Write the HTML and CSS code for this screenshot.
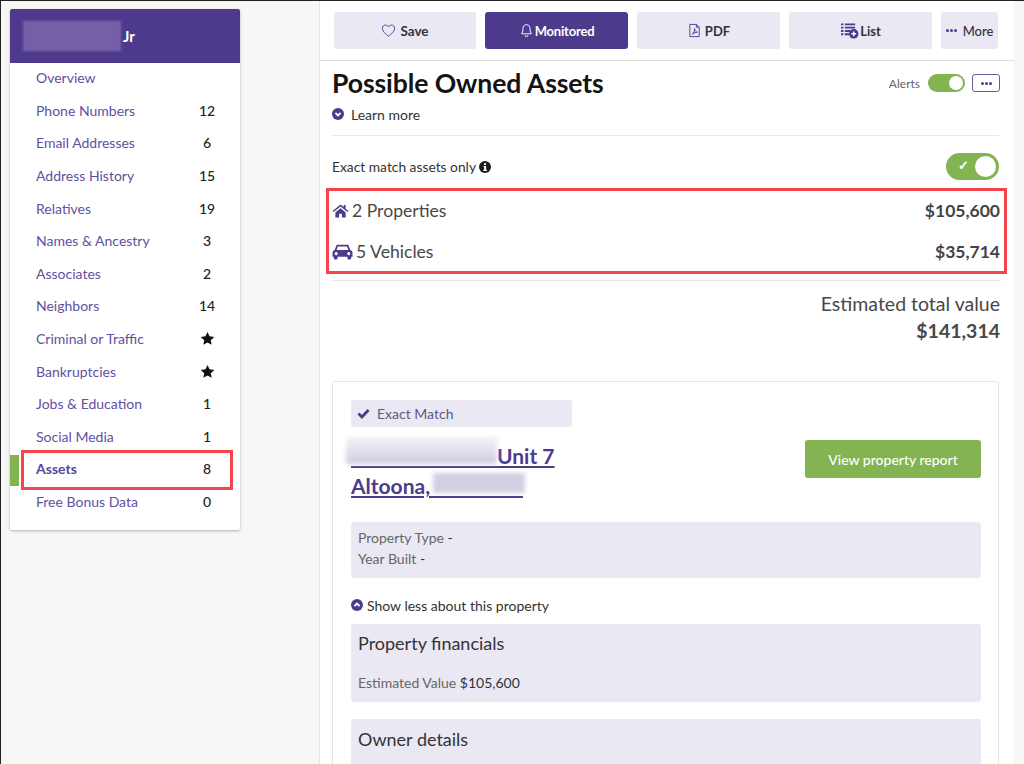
FILE: index.html
```html
<!DOCTYPE html>
<html lang="en">
<head>
<meta charset="utf-8">
<title>Possible Owned Assets</title>
<link rel="stylesheet" href="styles.css">
</head>
<body>
<div class="page">
  <aside class="side">
    <div class="side-head"><span class="blur-name"></span><span class="jr">Jr</span></div>
    <ul class="nav">
      <li class="nav-item"><span>Overview</span></li>
      <li class="nav-item"><span>Phone Numbers</span><b>12</b></li>
      <li class="nav-item"><span>Email Addresses</span><b>6</b></li>
      <li class="nav-item"><span>Address History</span><b>15</b></li>
      <li class="nav-item"><span>Relatives</span><b>19</b></li>
      <li class="nav-item"><span>Names &amp; Ancestry</span><b>3</b></li>
      <li class="nav-item"><span>Associates</span><b>2</b></li>
      <li class="nav-item"><span>Neighbors</span><b>14</b></li>
      <li class="nav-item"><span>Criminal or Traffic</span><b><svg class="star" viewBox="0 0 24 24"><path d="M12 1.500l3.200 7 7.600.9-5.600 5.200 1.500 7.500L12 18.300l-6.700 3.800 1.500-7.500L1.200 9.400l7.600-.9z"/></svg></b></li>
      <li class="nav-item"><span>Bankruptcies</span><b><svg class="star" viewBox="0 0 24 24"><path d="M12 1.500l3.200 7 7.600.9-5.600 5.200 1.500 7.500L12 18.300l-6.700 3.800 1.500-7.500L1.200 9.400l7.600-.9z"/></svg></b></li>
      <li class="nav-item"><span>Jobs &amp; Education</span><b>1</b></li>
      <li class="nav-item"><span>Social Media</span><b>1</b></li>
      <li class="nav-item active"><span>Assets</span><b>8</b></li>
      <li class="nav-item"><span>Free Bonus Data</span><b>0</b></li>
    </ul>
  </aside>

  <main class="main">
    <div class="toolbar">
      <button class="btn wide first">
        <svg class="ico" viewBox="0 0 16 16"><path d="M8 14S1.500 10 1.500 5.600C1.500 3.500 3 2.200 4.800 2.200 6.200 2.200 7.400 3 8 4.200 8.600 3 9.800 2.200 11.200 2.200c1.800 0 3.300 1.300 3.300 3.400C14.500 10 8 14 8 14z" fill="none" stroke="#4e3a8d" stroke-width="1"/></svg><span class="save-label">Save</span>
      </button>
      <button class="btn wide primary">
        <svg class="ico" viewBox="0 0 16 16"><path d="M8 1.800c-2.400 0-3.800 1.800-3.800 4v2.700L2.800 11.500h10.400l-1.400-3V5.800c0-2.200-1.400-4-3.800-4zM6.500 13a1.500 1.500 0 003 0" fill="none" stroke="#fff" stroke-width="1"/></svg>Monitored
      </button>
      <button class="btn wide">
        <svg class="ico" viewBox="0 0 16 16"><path d="M3 1.500h7l3 3v10H3zM10 1.500v3h3M5.500 12c1.500-1 3-4 2.500-6 .2 2 1.500 3.500 3 3.800-1.800 0-3.800 1-5.500 2.200z" fill="none" stroke="#4e3a8d" stroke-width="1"/></svg>PDF
      </button>
      <button class="btn wide">
        <svg class="ico list-ico" viewBox="0 0 20 18"><path d="M1 1.500h2.500v2H1zM5 1.500h11v2H5zM1 5h2.500v2H1zM5 5h11v2H5zM1 8.500h2.500v2H1zM5 8.500h6v2H5zM1 12h2.500v2H1zM5 12h5v2H5z" fill="#4e3a8d"/><circle cx="14.500" cy="12.500" r="5" fill="#4e3a8d"/><path d="M14.500 10v5M12 12.500h5" stroke="#fff" stroke-width="1.500"/></svg>List
      </button>
      <button class="btn more"><span class="dots"><i></i><i></i><i></i></span>More</button>
    </div>

    <div class="content">
      <div class="title-row">
        <h1>Possible Owned Assets</h1>
        <div class="alerts">
          <span class="alerts-label">Alerts</span>
          <span class="toggle small"><i></i></span>
          <span class="menu-btn"><span class="dots"><i></i><i></i><i></i></span></span>
        </div>
      </div>
      <div class="learn">
        <svg class="round-ico" viewBox="0 0 12 12"><circle cx="6" cy="6" r="6" fill="#4e3a8d"/><path d="M3.400 4.800L6 7.400l2.600-2.600" fill="none" stroke="#fff" stroke-width="1.800"/></svg>
        <span>Learn more</span>
      </div>
      <div class="exact-row">
        <span class="exact-label">Exact match assets only
          <svg class="info" viewBox="0 0 12 12"><circle cx="6" cy="6" r="6" fill="#1c1c1c"/><path d="M5 2.300h2v1.700H5zM4.600 5h2.500v3.700h.8V10H4.300V8.700h.9V6.200h-.6z" fill="#fff"/></svg>
        </span>
        <span class="toggle large"><em>✓</em><i></i></span>
      </div>
      <div class="summary">
        <div class="sum-row">
          <span class="sum-name">
            <svg class="home" viewBox="0 0 18 16"><path d="M9 1.500L.6 8.500l1 1.200L9 3.600l7.400 6.100 1-1.200-3-2.500V2h-2v2.200zM3.500 10.200V15.500h4v-4h3v4h4v-5.300L9 5.600z" fill="#4e3a8d"/></svg>2 Properties</span>
          <b>$105,600</b>
        </div>
        <div class="sum-row">
          <span class="sum-name">
            <svg class="car" viewBox="0 0 20 16"><path d="M4.500 1.500h11l2 5c1.200.4 2 1.300 2 2.500v4h-1.200v1.500a1 1 0 01-1 1h-1.600a1 1 0 01-1-1V13H5.300v1.500a1 1 0 01-1 1H2.700a1 1 0 01-1-1V13H.5V9c0-1.200.8-2.100 2-2.500zM5.600 3.200L4.400 6.500h11.200l-1.200-3.300zM4 8.500a1.500 1.500 0 100 3 1.500 1.500 0 000-3zM16 8.500a1.500 1.500 0 100 3 1.500 1.500 0 000-3z" fill="#4e3a8d" fill-rule="evenodd"/></svg>5 Vehicles</span>
          <b>$35,714</b>
        </div>
      </div>
      <div class="total">
        <div class="total-label">Estimated total value</div>
        <div class="total-value">$141,314</div>
      </div>

      <section class="card">
        <div class="badge">
          <svg class="check" viewBox="0 0 14 12"><path d="M1.500 6l3.800 3.800L12.500 2.200" fill="none" stroke="#4e3a8d" stroke-width="3"/></svg>
          <span>Exact Match</span>
        </div>
        <div class="prop-head">
          <div class="addr">
            <a class="addr-link"><span class="gap-a"></span>Unit 7</a>
            <a class="addr-link"><span>Altoona,</span><span class="gap-b"></span></a>
            <span class="blur-a"></span>
            <span class="blur-b"></span>
          </div>
          <button class="report">View property report</button>
        </div>
        <div class="panel facts">
          <div>Property Type <span class="dash">-</span></div>
          <div>Year Built <span class="dash">-</span></div>
        </div>
        <div class="less">
          <svg class="round-ico" viewBox="0 0 12 12"><circle cx="6" cy="6" r="6" fill="#4e3a8d"/><path d="M3.400 7.200L6 4.600l2.600 2.600" fill="none" stroke="#fff" stroke-width="1.800"/></svg>
          <span>Show less about this property</span>
        </div>
        <div class="panel fin">
          <h2>Property financials</h2>
          <p>Estimated Value <span class="val">$105,600</span></p>
        </div>
        <div class="panel owner">
          <h2>Owner details</h2>
        </div>
      </section>
    </div>
  </main>
</div>
</body>
</html>
```
FILE: styles.css
```css
*, *::before, *::after { box-sizing: border-box; }
html, body { margin: 0; padding: 0; height: 764px; overflow: hidden; }
body { font-family: Lato, "Open Sans", sans-serif; background: #f7f7f7; color: #222; }

.page {
  display: flex;
  align-items: flex-start;
  height: 764px;
  border-top: 1px solid #222;
  border-left: 1px solid #222;
  overflow: hidden;
}

/* Sidebar */
.side {
  width: 230px;
  margin: 8px 0 0 9px;
  background: #fff;
  border-radius: 2px;
  box-shadow: 0 1px 3px rgba(0,0,0,.28);
  flex: none;
}
.side-head {
  height: 54px;
  background: #4e3a8d;
  border-radius: 2px 2px 0 0;
  display: flex;
  align-items: center;
  padding-left: 13px;
  color: #fff;
  font-weight: 700;
  font-size: 15px;
}
.blur-name {
  width: 98px;
  height: 30px;
  background: #7560a8;
  filter: blur(1px);
  margin-right: 2px;
}
.nav { list-style: none; margin: -1.6px 0 0; padding: 0 0 12.600px; }
.nav-item {
  position: relative;
  height: 32.6px;
  display: flex;
  align-items: center;
  justify-content: space-between;
  padding: 0 23px 0 26px;
  font-size: 14px;
  color: #5f51a0;
}
.nav-item b {
  width: 20px;
  text-align: center;
  font-weight: 500;
  color: #222;
  display: flex;
  justify-content: center;
}
.star { width: 15px; height: 15px; fill: #111; }
.nav-item.active { font-weight: 700; color: #55459a; }
.nav-item.active b { font-weight: 500; }
.nav-item.active::before {
  content: "";
  position: absolute;
  left: 0; top: 2px;
  width: 9px; height: 31px;
  background: #84b351;
}
.nav-item.active::after {
  content: "";
  position: absolute;
  left: 11px; top: -3px;
  width: 212px; height: 40px;
  border: 3px solid #f4444c;
}

/* Main */
.main {
  width: 695px;
  height: 763px;
  margin-left: 79px;
  background: #fff;
  border-left: 1px solid #e4e4e4;
  flex: none;
}
.toolbar {
  height: 60px;
  display: flex;
  gap: 9px;
  padding: 11px 15px 0 14px;
  border-bottom: 1px solid #ddd;
}
.btn {
  height: 37px;
  border: 0;
  border-radius: 3px;
  background: #eae8f3;
  font: 700 13px Lato, sans-serif;
  color: #33333f;
  display: flex;
  align-items: center;
  justify-content: center;
  padding: 0;
}
.btn.wide { width: 143px; }
.btn.wide.first { width: 142px; }
.btn.more { width: 57px; font-weight: 500; gap: 6px; }
.btn.primary { background: #4e3a8d; color: #fff; letter-spacing: -.2px; }
.btn.primary .ico { margin-right: 1px; }
.save-label { font-size: 13.5px; margin-left: 1px; }
.ico { width: 15px; height: 15px; margin-right: 3px; }
.list-ico { width: 19px; height: 17px; margin-right: 1px; }
.dots { display: inline-flex; gap: 1px; }
.dots i { width: 3px; height: 3px; background: #4e3a8d; border-radius: 50%; }

.content { padding: 0 15px 0 12px; }
.title-row {
  display: flex;
  justify-content: space-between;
  align-items: center;
  height: 44px;
}
h1 { margin: 0; font-size: 26.6px; font-weight: 700; color: #141414; letter-spacing: -.1px; }
.alerts { display: flex; align-items: center; gap: 6px; margin-right: -1px; }
.alerts-label { font-size: 12px; color: #666; margin-right: 2px; }
.toggle { position: relative; display: inline-block; background: #84b351; border-radius: 20px; }
.toggle.small { width: 37px; height: 18px; }
.toggle.small i { position: absolute; right: 2px; top: 2px; width: 14px; height: 14px; background: #fff; border-radius: 50%; }
.toggle.large { width: 53px; height: 27px; color: #fff; }
.toggle.large i { position: absolute; right: 3px; top: 3px; width: 21px; height: 21px; background: #fff; border-radius: 50%; }
.toggle.large em { position: absolute; left: 12px; top: 4px; font-style: normal; font-size: 13px; font-weight: 700; }
.menu-btn {
  width: 28px; height: 18px;
  border: 1px solid #6a5b9e;
  border-radius: 3px;
  display: flex;
  align-items: center;
  justify-content: center;
  margin-left: 1px;
}

.learn {
  display: flex;
  align-items: center;
  gap: 7px;
  font-size: 14px;
  color: #333;
  height: 31px;
  border-bottom: 1px solid #e8e8f2;
  padding-bottom: 12px;
}
.round-ico { width: 12px; height: 12px; flex: none; }

.exact-row {
  display: flex;
  justify-content: space-between;
  align-items: center;
  height: 52px;
  padding-top: 9px;
  font-size: 13.8px;
  color: #333;
}
.exact-label { display: flex; align-items: center; gap: 3px; }
.info { width: 12px; height: 12px; }

.summary {
  height: 86px;
  margin: 0 -8px 0 -6px;
  padding: 0 4px 0 3px;
  border: 3px solid #f4444c;
}
.sum-row {
  display: flex;
  justify-content: space-between;
  align-items: center;
  height: 41px;
  padding-bottom: 2px;
  font-size: 17.6px;
  color: #484848;
}
.sum-row b { font-size: 17.5px; font-weight: 700; color: #444; }
.sum-name { display: flex; align-items: center; gap: 3px; }
.home { width: 17px; height: 15px; }
.car { width: 21px; height: 17px; }

.total {
  margin: 6px -1px 0 0;
  border-top: 1px solid #e5e5e8;
  text-align: right;
  padding-top: 10px;
  color: #484848;
}
.total-label { font-size: 19.5px; line-height: 25px; }
.total-value { font-size: 19.5px; font-weight: 700; line-height: 30px; }

.card {
  margin-top: 35px;
  border: 1px solid #e5e5e8;
  border-radius: 3px;
  padding: 18px 17px 0 18px;
  height: 420px;
}
.badge {
  width: 221px;
  height: 27px;
  background: #eae8f3;
  border-radius: 3px;
  display: flex;
  align-items: center;
  gap: 7px;
  padding: 0 0 1px 6px;
  font-size: 14px;
  color: #5f5a84;
}
.check { width: 13px; height: 11px; }
.prop-head {
  display: flex;
  justify-content: space-between;
  align-items: flex-start;
  height: 82px;
  margin-top: 13px;
}
.addr { position: relative; width: 203px; margin-top: 1px; }
.addr-link {
  display: block;
  font-size: 21px;
  font-weight: 700;
  line-height: 30px;
  color: #4e3a8d;
  text-decoration: underline;
  text-underline-offset: 2px;
  white-space: pre;
}
.gap-a, .gap-b {
  display: inline-block;
  height: 2px;
  background: #4e3a8d;
  vertical-align: -4px;
}
.gap-a { width: 146px; }
.gap-b { width: 93px; }
.blur-a, .blur-b { position: absolute; filter: blur(2px); }
.blur-a { left: -5px; top: -4px; width: 151px; height: 27px; background: linear-gradient(180deg, #f4f3f8, #cfcbe0); }
.blur-b { left: 82px; top: 32px; width: 92px; height: 20px; background: #d2cfe1; }
.report {
  width: 176px;
  height: 38px;
  background: #84b351;
  border: 0;
  border-radius: 3px;
  color: #fff;
  font: 500 14px Lato, sans-serif;
}
.panel { background: #eae8f3; border-radius: 3px; padding: 0 7px; }
.facts {
  height: 56px;
  padding-top: 5px;
  font-size: 14px;
  line-height: 21px;
  color: #666;
}
.dash { color: #333; }
.less {
  display: flex;
  align-items: center;
  gap: 4px;
  height: 46px;
  padding-top: 8px;
  font-size: 14px;
  color: #333;
}
.fin { height: 78px; padding-top: 8px; }
h2 { margin: 0; font-size: 18px; font-weight: 400; line-height: 23px; color: #333; }
.fin p { margin: 19px 0 0; font-size: 14px; color: #666; }
.val { color: #333; }
.owner { height: 70px; margin-top: 17px; padding-top: 9px; }
```
